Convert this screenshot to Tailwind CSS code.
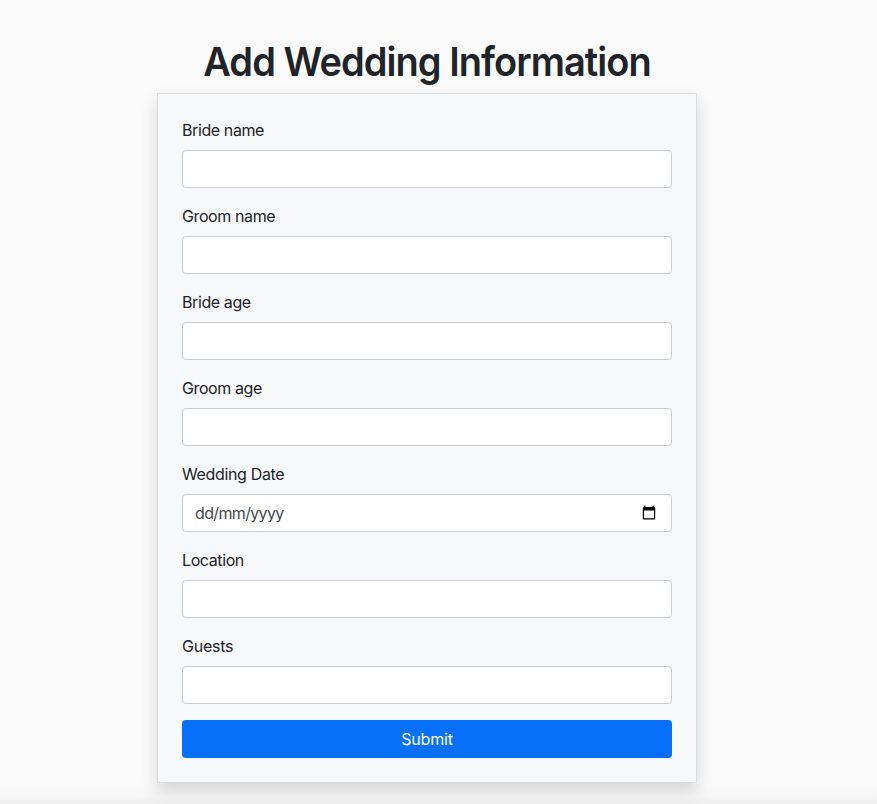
<!DOCTYPE html>
<html lang="en">
<head>
<meta charset="utf-8">
<title>Add Wedding Information</title>
<script src="https://cdn.jsdelivr.net/npm/@tailwindcss/browser@4"></script>
</head>
<body class="h-[804px] overflow-hidden bg-[#fafafa] bg-[linear-gradient(to_bottom,#fafafa_782px,#f5f5f5_798px,#eeeeee_804px)] font-[Inter,sans-serif] text-base text-[#202327]">
<main class="ml-[157px] w-[540px] pt-[38px]">
<h1 class="mb-[7px] scale-x-[.95] text-center text-[40px] leading-[48px] font-[580] whitespace-nowrap tracking-[-1px]">Add Wedding Information</h1>
<form class="border border-[#dadce0] bg-[#f7f8fa] p-6 shadow-[0_8px_16px_rgba(0,0,0,0.15)]">
<div class="mb-4"><label class="mb-2 block leading-6 tracking-[-0.4px]">Bride name</label><div class="h-[38px] rounded border border-[#c9ccd0] bg-white"></div></div>
<div class="mb-4"><label class="mb-2 block leading-6 tracking-[-0.4px]">Groom name</label><div class="h-[38px] rounded border border-[#c9ccd0] bg-white"></div></div>
<div class="mb-4"><label class="mb-2 block leading-6 tracking-[-0.4px]">Bride age</label><div class="h-[38px] rounded border border-[#c9ccd0] bg-white"></div></div>
<div class="mb-4"><label class="mb-2 block leading-6 tracking-[-0.4px]">Groom age</label><div class="h-[38px] rounded border border-[#c9ccd0] bg-white"></div></div>
<div class="mb-4"><label class="mb-2 block leading-6 tracking-[-0.35px]">Wedding Date</label><div class="flex h-[38px] items-center justify-between rounded border border-[#c9ccd0] bg-white pr-[14px] pl-3"><span class="tracking-[-0.65px] text-[#46494d]">dd/mm/yyyy</span>
<svg class="size-4" viewBox="0 0 16 16"><path fill-rule="evenodd" d="M3 .5h1.500V2h7V.5H13V2q1.200 0 1.200 1v10.500q0 1-1 1H2.800q-1 0-1-1V3Q1.800 2 3 2zM3 5.500v7.700h10V5.500z"/></svg></div></div>
<div class="mb-4"><label class="mb-2 block leading-6 tracking-[-0.4px]">Location</label><div class="h-[38px] rounded border border-[#c9ccd0] bg-white"></div></div>
<div class="mb-4"><label class="mb-2 block leading-6 tracking-[-0.25px]">Guests</label><div class="h-[38px] rounded border border-[#c9ccd0] bg-white"></div></div>
<button type="button" class="block h-[38px] w-full rounded bg-[#0770fa] text-white tracking-[-0.2px]">Submit</button>
</form>
</main>
</body>
</html>
